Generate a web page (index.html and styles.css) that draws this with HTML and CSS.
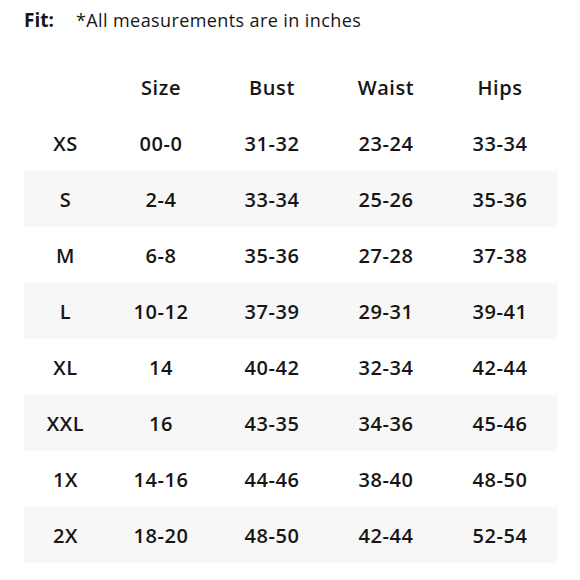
FILE: index.html
```html
<!DOCTYPE html>
<html>
<head>
<meta charset="utf-8">
<link rel="stylesheet" href="styles.css">
</head>
<body>
<div class="page">
  <div class="title"><span class="fit">Fit:</span><span class="note">*All measurements are in inches</span></div>
  <div class="table">
    <div class="row head"><div></div><div>Size</div><div>Bust</div><div>Waist</div><div>Hips</div></div>
    <div class="row"><div>XS</div><div>00-0</div><div>31-32</div><div>23-24</div><div>33-34</div></div>
    <div class="row alt"><div>S</div><div>2-4</div><div>33-34</div><div>25-26</div><div>35-36</div></div>
    <div class="row"><div>M</div><div>6-8</div><div>35-36</div><div>27-28</div><div>37-38</div></div>
    <div class="row alt"><div>L</div><div>10-12</div><div>37-39</div><div>29-31</div><div>39-41</div></div>
    <div class="row"><div>XL</div><div>14</div><div>40-42</div><div>32-34</div><div>42-44</div></div>
    <div class="row alt"><div>XXL</div><div>16</div><div>43-35</div><div>34-36</div><div>45-46</div></div>
    <div class="row"><div>1X</div><div>14-16</div><div>44-46</div><div>38-40</div><div>48-50</div></div>
    <div class="row alt"><div>2X</div><div>18-20</div><div>48-50</div><div>42-44</div><div>52-54</div></div>
  </div>
</div>
</body>
</html>
```
FILE: styles.css
```css
html, body {
  margin: 0;
  padding: 0;
  background: #ffffff;
}
body {
  font-family: "Open Sans", "Liberation Sans", sans-serif;
  color: #161616;
}
.page {
  padding: 7px 23px 0 24px;
}
.title {
  display: flex;
  align-items: baseline;
  height: 27px;
}
.fit {
  font-weight: 700;
  font-size: 19px;
  width: 52px;
}
.note {
  font-size: 18px;
  font-weight: 400;
  letter-spacing: 0.4px;
}
.table {
  margin-top: 25px;
}
.row {
  display: grid;
  grid-template-columns: 83px 108px 114px 114px 114px;
  height: 56px;
  align-items: center;
  font-size: 20px;
  font-weight: 600;
  letter-spacing: 0.6px;
}
.row > div {
  text-align: center;
}
.row.alt {
  background: #f7f7f7;
}
```
